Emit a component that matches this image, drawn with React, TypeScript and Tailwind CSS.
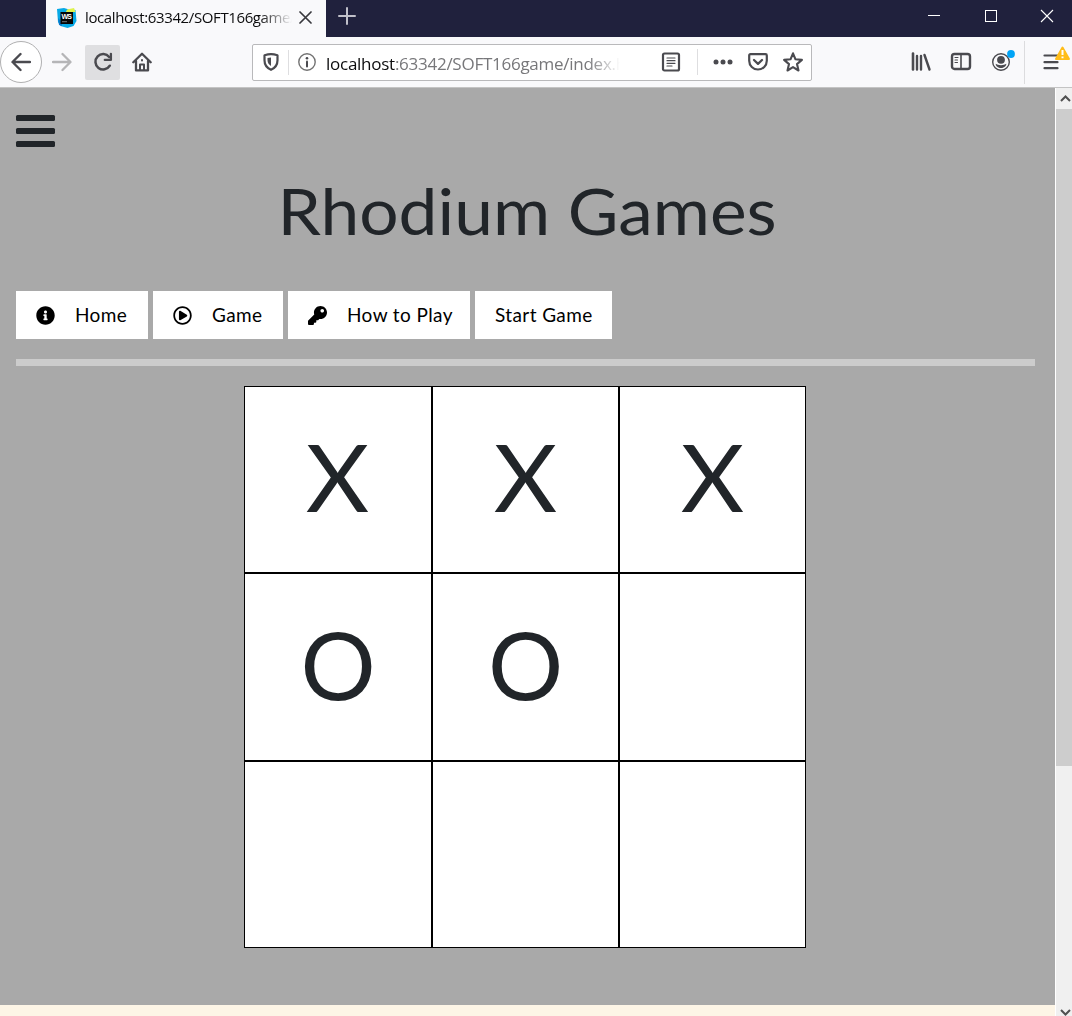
import type { ReactNode } from "react";
import { FaInfoCircle, FaKey, FaRegPlayCircle } from "react-icons/fa";

function Icon({ size = 20, className = "", children }: { size?: number; className?: string; children: ReactNode }) {
  return (
    <svg
      width={size}
      height={size}
      viewBox={`0 0 ${size} ${size}`}
      fill="none"
      stroke="#4a4a4f"
      strokeWidth="2"
      strokeLinecap="round"
      strokeLinejoin="round"
      className={`block shrink-0 ${className}`}
    >
      {children}
    </svg>
  );
}

function TitleBar() {
  return (
    <header className="flex h-[37px] items-stretch bg-[#20213d]">
      <div className="ml-[46px] flex w-[280px] items-center bg-[#f9f9fb] pb-[2px] pl-[11px]">
        <svg width="20" height="20" viewBox="0 0 20 20" className="shrink-0">
          <path d="M0 1 7 0l5 1.500 6.500.5 1 11-3 5-6 2-7-2-2.500-4z" fill="#07a9e6" />
          <path d="M10 1.500 17 0l1.500 4H9z" fill="#dff34c" />
          <path d="M1 10 5 14v4l-3-1z" fill="#0879c9" />
          <rect x="3.500" y="4" width="12.500" height="12" fill="#050505" />
          <text x="4.500" y="10.500" fill="white" fontSize="7" fontWeight="700" fontFamily="Liberation Sans, sans-serif" textLength="10.500">WS</text>
          <rect x="5" y="13.200" width="5" height="1" fill="#777" />
        </svg>
        <div className="ml-2 w-[213px] whitespace-nowrap font-['Open_Sans',sans-serif] text-[15px] tracking-[-0.39px] text-[#0c0c0d] [mask-image:linear-gradient(to_right,black_175px,transparent_207px)]">
          localhost:63342/SOFT166game/
        </div>
        <svg width="13" height="13" viewBox="0 0 13 13" className="ml-px shrink-0" stroke="#38383d" strokeWidth="1.700" strokeLinecap="round">
          <path d="M1 1 12 12M12 1 1 12" />
        </svg>
      </div>
      <svg width="18" height="18" viewBox="0 0 18 18" className="ml-3 mt-[7px]" stroke="#c0c0ca" strokeWidth="2" strokeLinecap="round">
        <path d="M9 1V17M1 9H17" />
      </svg>
      <div className="ml-auto mr-[18px] flex gap-[43px] pt-[9px]">
        <svg width="14" height="14" viewBox="0 0 14 14" stroke="#fff"><path d="M1 6.500H13" /></svg>
        <svg width="14" height="14" viewBox="0 0 14 14" stroke="#fff" fill="none"><rect x="1.500" y="1.500" width="11" height="11" /></svg>
        <svg width="14" height="14" viewBox="0 0 14 14" stroke="#fff" strokeWidth="1.100" className="-ml-px"><path d="M1 1 13 13M13 1 1 13" /></svg>
      </div>
    </header>
  );
}

function AddressBar() {
  return (
    <div className="ml-[100px] flex h-[37px] w-[560px] items-center rounded-[2px] border border-[#b9b9bb] bg-white">
      <Icon className="ml-[8px]">
        <path d="M10 2.200c2.300 0 4.700.5 6.500 1v5c0 4.500-2.300 7.700-6.500 9.600-4.200-1.900-6.500-5.100-6.500-9.600v-5c1.800-.5 4.200-1 6.500-1Z" strokeWidth="2.200" />
        <path d="M10 5.500V14c-2.300-1.400-3.500-3.300-3.500-6V6.100Z" fill="#4a4a4f" stroke="none" />
      </Icon>
      <div className="ml-[7px] h-[25px] w-px bg-[#dedee0]" />
      <Icon className="ml-[8px]">
        <circle cx="10" cy="10" r="8.200" strokeWidth="1.400" stroke="#737373" />
        <path d="M10 9.500v5" strokeWidth="2" /><circle cx="10" cy="6.200" r="1.300" fill="#4a4a4f" stroke="none" />
      </Icon>
      <div className="ml-[9px] w-[300px] whitespace-nowrap pt-[3px] font-['Open_Sans',sans-serif] text-[17px] tracking-[-0.26px] text-[#77777a] [mask-image:linear-gradient(to_right,black_262px,transparent_294px)]">
        <span className="text-[#0c0c0d]">localhost</span>:63342/SOFT166game/index.h
      </div>
      <Icon className="ml-[35px]">
        <rect x="2" y="1.500" width="16" height="17" rx="1.500" strokeWidth="2.200" />
        <path d="M6 6h8M6 8.700h8M6 11.300h8M6 14h5" strokeWidth="1.200" />
      </Icon>
      <div className="ml-[16px] h-[26px] w-px bg-[#dedee0]" />
      <svg width="22" height="20" viewBox="0 0 22 20" fill="#4a4a4f" className="ml-[14px]">
        <circle cx="4" cy="10" r="2.500" /><circle cx="11" cy="10" r="2.500" /><circle cx="18" cy="10" r="2.500" />
      </svg>
      <Icon className="ml-[14px]">
        <path d="M2.500 2.200h15q1.300 0 1.300 1.300v5.200a8.800 8.800 0 0 1-17.600 0V3.500q0-1.300 1.300-1.300Z" strokeWidth="2.200" />
        <path d="m6 8 4 3.800L14 8" strokeWidth="2.300" />
      </Icon>
      <Icon className="ml-[15px]">
        <path d="m10 1.300 2.500 6 6.400.6-4.900 4.200 1.500 6.400-5.500-3.400-5.500 3.400L6 12.100 1.100 7.900l6.400-.6Z" strokeWidth="2.100" />
      </Icon>
    </div>
  );
}

function Toolbar() {
  return (
    <div className="flex h-[51px] items-center border-b border-[#c4c4c4] bg-[#f9f9fb]">
      <div className="flex h-[42px] w-[42px] shrink-0 items-center justify-center rounded-full border border-[#b0b0b1] bg-white">
        <Icon><path d="M19 10H1.800M9.500 2 1.500 10l8 8" strokeWidth="2.400" /></Icon>
      </div>
      <Icon className="ml-[10px]"><path d="M1 10h17.200M10.500 2l8 8-8 8" strokeWidth="2.300" stroke="#b5b5b7" /></Icon>
      <div className="ml-[13px] flex h-[35px] w-[35px] items-center justify-center rounded-[2px] bg-[#dfdfe1]">
        <Icon>
          <path d="M16.800 13.700a7.700 7.700 0 1 1-.6-8.700" strokeWidth="2.500" />
          <path d="M17.900 1.800v6.100h-6.100" strokeWidth="2.300" />
        </Icon>
      </div>
      <Icon className="ml-[12px]">
        <path d="m1.300 10.300 8.700-8.500 8.700 8.500M4 9v9.400h12V9" strokeWidth="2.300" />
        <path d="M8 18v-5.500h4V18" /><path d="M10 8v.5" />
      </Icon>
      <AddressBar />
      <Icon className="ml-[99px]" size={22}>
        <path d="M2 2.500v16" strokeWidth="2.600" /><path d="M6 5v13.500M10 5v13.500M13.500 4l5 14.500" strokeWidth="2.400" />
      </Icon>
      <Icon className="ml-[17px]" size={22}>
        <rect x="2" y="3" width="18" height="15" rx="2.500" strokeWidth="2.400" />
        <path d="M11 3.500v14" strokeWidth="1.600" /><path d="M5 6.500h3M5 9h2.500M5 11.500h2.500" strokeWidth="1.100" />
      </Icon>
      <svg width="26" height="26" viewBox="0 0 26 26" className="ml-[18px] shrink-0 overflow-visible">
        <circle cx="11" cy="13" r="8.300" fill="none" stroke="#4a4a4f" strokeWidth="1.400" />
        <circle cx="11" cy="10.800" r="3.900" fill="#4a4a4f" />
        <path d="M5.700 14.800c1 .7 3.300 1.500 5.300 1.500s4.300-.8 5.300-1.500c0 2.500-2.500 4.200-5.300 4.200s-5.300-1.700-5.300-4.200Z" fill="#4a4a4f" />
        <circle cx="21" cy="5" r="3.900" fill="#00a4f6" />
      </svg>
      <div className="ml-[8px] h-[43px] w-px shrink-0 bg-[#dcdcde]" />
      <svg width="29" height="32" viewBox="0 0 29 32" className="ml-[17px] shrink-0">
        <path d="M2.500 9.500h13M2.500 16.200h13M2.500 22.200h13" stroke="#4a4a4f" strokeWidth="2.200" strokeLinecap="round" />
        <path d="M20.500 1.500 27 13H14Z" fill="#ffbd19" stroke="#ffbd19" strokeWidth="2" strokeLinejoin="round" />
        <path d="M20.500 4v5M20.500 10.600v1.700" stroke="white" strokeWidth="2" />
      </svg>
    </div>
  );
}

function NavButton({ icon, label, className }: { icon?: ReactNode; label: string; className: string }) {
  return (
    <button className={`flex h-12 items-center whitespace-nowrap bg-white pl-5 text-black ${className}`}>
      {icon && <span className="mr-5 w-[19px] shrink-0">{icon}</span>}
      <span>{label}</span>
    </button>
  );
}

function Board() {
  const cells = ["X", "X", "X", "O", "O", "", "", "", ""];
  return (
    <div className="ml-[244px] mt-5 grid h-[562px] w-[562px] grid-cols-[188px_187px_187px] grid-rows-[187px_188px_187px]">
      {cells.map((mark, index) => (
        <div key={index} className="flex items-center justify-center border border-black bg-white pb-[7px] text-[94px] leading-none">
          <span className={mark === "O" ? "origin-center" : "origin-center scale-x-[1.04]"}>{mark}</span>
        </div>
      ))}
    </div>
  );
}

function Scrollbar() {
  return (
    <div className="flex w-[17px] flex-col border-l border-white bg-[#f0f0f0]">
      <svg width="16" height="21" viewBox="0 0 16 21" fill="none" stroke="#505050" strokeWidth="2"><path d="m5 13 4.500-4.500L14 13" /></svg>
      <div className="h-[657px] bg-[#cdcdcd]" />
      <svg width="16" height="10" viewBox="0 0 16 10" fill="none" stroke="#505050" strokeWidth="2" className="mt-auto"><path d="m5 4 4.500 4.500L14 4" /></svg>
    </div>
  );
}

export default function App() {
  return (
    <div className="flex h-[1016px] w-[1072px] flex-col overflow-hidden">
      <TitleBar />
      <Toolbar />
      <div className="flex min-h-0 flex-1">
        <main className="flex w-[1055px] flex-col bg-[#a9a9a9] font-['Lato',sans-serif] text-[#212529]">
          <button aria-label="Menu" className="ml-4 mt-[27px] flex h-8 w-[39px] flex-col justify-between">
            <span className="h-[6px] w-full rounded-[1.500px] bg-current" />
            <span className="h-[6px] w-full rounded-[1.500px] bg-current" />
            <span className="h-[6px] w-full rounded-[1.500px] bg-current" />
          </button>
          <h1 className="mt-[24px] flex h-[80px] items-center justify-center whitespace-nowrap text-[64px] leading-[80px]">
            <span className="origin-center scale-x-[1.085]">Rhodium Games</span>
          </h1>
          <nav className="ml-4 mt-[40px] flex gap-[5px] text-[19px] tracking-[0.4px]">
            <NavButton className="w-[132px]" label="Home" icon={<FaInfoCircle size={19} />} />
            <NavButton className="w-[130px]" label="Game" icon={<FaRegPlayCircle size={19} />} />
            <NavButton className="w-[182px]" label="How to Play" icon={<FaKey size={19} />} />
            <NavButton className="w-[137px]" label="Start Game" />
          </nav>
          <div className="ml-4 mt-5 h-[7px] w-[1019px] bg-[#ccc]" />
          <Board />
          <div className="mt-auto h-[11px] bg-[#fdf5e6]" />
        </main>
        <Scrollbar />
      </div>
    </div>
  );
}
